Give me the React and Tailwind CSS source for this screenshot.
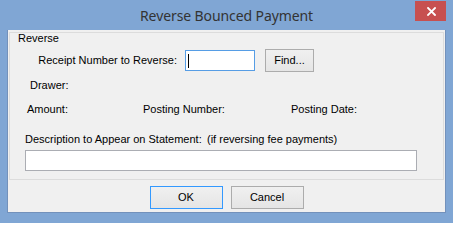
export default function App() {
  const ui = { fontFamily: '"Liberation Sans", Arial, sans-serif' };
  return (
    <div className="w-[453px] h-[223px] bg-[#80a6d4] flex flex-col overflow-hidden" style={ui}>
      {/* title bar */}
      <div className="relative h-[30px] flex items-center justify-center shrink-0">
        <span className="text-[14px] text-[#333333] leading-none pt-[1px] tracking-[-0.1px]" style={{ fontFamily: '"Noto Sans", "Open Sans", sans-serif' }}>
          Reverse Bounced Payment
        </span>
        <div className="absolute left-[415px] top-[1px] w-[31px] h-[20px] bg-[#c75050] flex items-center justify-center">
          <svg width="9" height="9" viewBox="0 0 9 9" className="mt-[1px] ml-[1px]">
            <path d="M1 1 L8 8 M8 1 L1 8" stroke="#ffffff" strokeWidth="1.8" strokeLinecap="square" />
          </svg>
        </div>
      </div>
      {/* client */}
      <div className="ml-[7px] w-[439px] h-[183px] border-x border-b border-[#7391bb] bg-[#f0f0f0] flex flex-col text-[11px] text-black">
        <div className="ml-[1px] mt-[2px] w-[435px] h-[148px] border border-[#dcdcdc] flex flex-col">
          <div className="pl-[8px] h-[11px] leading-[11px]">Reverse</div>
          <div className="mt-[5px] h-[23px] flex items-center">
            <span className="w-[167px] text-right leading-[13px]">Receipt Number to Reverse:</span>
            <div className="ml-[8px] w-[70px] h-[21px] border border-[#569de5] bg-white flex items-center">
              <div className="ml-[2px] w-[1px] h-[14px] bg-black" />
            </div>
            <button className="ml-[10px] w-[49px] h-[23px] border border-[#acacac] bg-gradient-to-b from-[#f0f0f0] to-[#e5e5e5] text-[11px] leading-[13px] text-black">
              Find...
            </button>
          </div>
          <div className="mt-[7px] h-[13px] leading-[13px] pl-[20px]">Drawer:</div>
          <div className="mt-[11px] h-[13px] leading-[13px] pl-[17px] flex">
            <span className="w-[116px]">Amount:</span>
            <span className="w-[148px]">Posting Number:</span>
            <span>Posting Date:</span>
          </div>
          <div className="mt-[17px] h-[13px] leading-[13px] pl-[15px] flex">
            <span className="w-[182px]">Description to Appear on Statement:</span>
            <span>(if reversing fee payments)</span>
          </div>
          <div className="mt-[4px] ml-[15px] w-[392px] h-[21px] border border-[#abadb3] bg-white" />
        </div>
        <div className="mt-[6px] flex justify-center gap-[8px]">
          <button className="w-[73px] h-[23px] border border-[#3399ff] bg-gradient-to-b from-[#f0f0f0] to-[#e5e5e5] text-[11px] leading-[13px] text-black">
            OK
          </button>
          <button className="w-[73px] h-[23px] border border-[#acacac] bg-gradient-to-b from-[#f0f0f0] to-[#e5e5e5] text-[11px] leading-[13px] text-black">
            Cancel
          </button>
        </div>
      </div>
    </div>
  );
}
